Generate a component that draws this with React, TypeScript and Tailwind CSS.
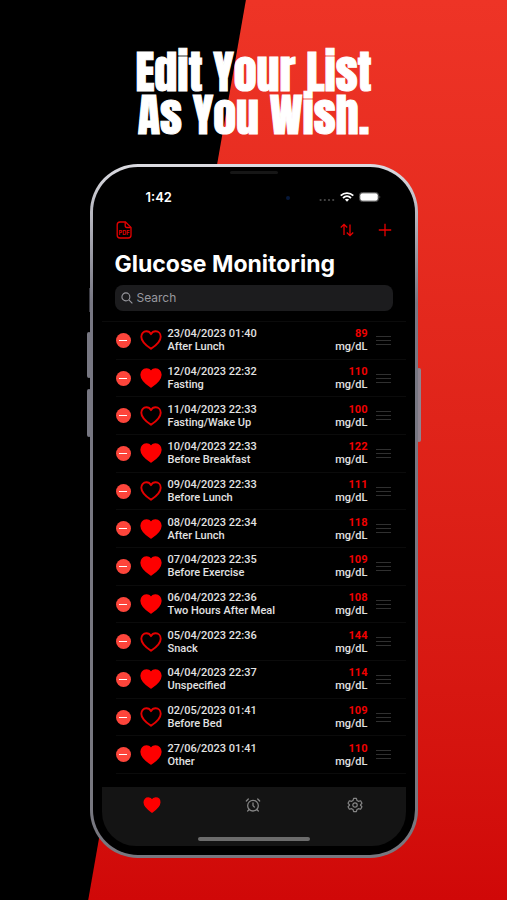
import { AlarmClock } from "lucide-react";

type Reading = {
  date: string;
  label: string;
  value: number;
  filled: boolean;
};

const readings: Reading[] = [
  { date: "23/04/2023 01:40", label: "After Lunch", value: 89, filled: false },
  { date: "12/04/2023 22:32", label: "Fasting", value: 110, filled: true },
  { date: "11/04/2023 22:33", label: "Fasting/Wake Up", value: 100, filled: false },
  { date: "10/04/2023 22:33", label: "Before Breakfast", value: 122, filled: true },
  { date: "09/04/2023 22:33", label: "Before Lunch", value: 111, filled: false },
  { date: "08/04/2023 22:34", label: "After Lunch", value: 118, filled: true },
  { date: "07/04/2023 22:35", label: "Before Exercise", value: 109, filled: true },
  { date: "06/04/2023 22:36", label: "Two Hours After Meal", value: 108, filled: true },
  { date: "05/04/2023 22:36", label: "Snack", value: 144, filled: false },
  { date: "04/04/2023 22:37", label: "Unspecified", value: 114, filled: true },
  { date: "02/05/2023 01:41", label: "Before Bed", value: 109, filled: false },
  { date: "27/06/2023 01:41", label: "Other", value: 110, filled: true },
];

function HeartIcon({ filled, className }: { filled: boolean; className: string }) {
  return (
    <svg viewBox="0 0 22 20" className={className} aria-hidden="true">
      <path
        d="M11 18.800C5.200 14.900 1.300 11.200 1.300 6.700 1.300 3.500 3.500 1.300 6.300 1.300c2 0 3.800 1.100 4.700 2.900.9-1.800 2.700-2.900 4.700-2.900 2.800 0 5 2.200 5 5.400 0 4.500-3.900 8.200-9.700 12.100z"
        fill={filled ? "#fe0000" : "none"}
        stroke={filled ? "#fe0000" : "#e40000"}
        strokeWidth="1.900"
        strokeLinejoin="round"
      />
    </svg>
  );
}

function PdfIcon() {
  return (
    <svg viewBox="0 0 16 18" className="h-[18px] w-4" fill="none" stroke="#e60000" strokeWidth="1.300" aria-hidden="true">
      <path d="M4 1h5.500L15 6.400v7.800c0 1.800-1 2.800-2.800 2.800H4c-1.800 0-2.800-1-2.800-2.800V3.800C1.200 2 2.200 1 4 1z" />
      <path d="M9.200 1.200v3.600c0 1 .6 1.700 1.700 1.700h3.900" />
      <text x="8" y="14" textAnchor="middle" fontSize="5.500" fontWeight="700" fontFamily="Inter, sans-serif" fill="#e60000" stroke="none">
        PDF
      </text>
    </svg>
  );
}

function StatusBar() {
  return (
    <div className="flex h-4 items-center justify-between pr-[25px] pl-11">
      <span className="text-[13px] leading-4 font-semibold text-white">1:42</span>
      <div className="flex items-center gap-[5px]">
        <svg viewBox="0 0 16 4" className="mt-1.5 h-1 w-4" fill="#4a4a4a" aria-hidden="true">
          <circle cx="1.600" cy="2" r="1.100" />
          <circle cx="5.800" cy="2" r="1.100" />
          <circle cx="10" cy="2" r="1.100" />
          <circle cx="14.200" cy="2" r="1.100" />
        </svg>
        <svg viewBox="0 0 14 10" className="h-2.5 w-3.5" fill="none" stroke="#fff" strokeWidth="1.800" aria-hidden="true">
          <path d="M.7 3.600c3.600-3.400 9-3.400 12.600 0" />
          <path d="M3 6c2.400-2.200 5.600-2.200 8 0" />
          <path d="M4.900 7.500c1.300-1 2.900-1 4.200 0L7 9.700z" fill="#fff" stroke="none" />
        </svg>
        <svg viewBox="0 0 22 10" className="h-2.5 w-[22px]" aria-hidden="true">
          <rect x=".5" y=".5" width="19" height="9" rx="2.800" fill="none" stroke="#555" />
          <rect x="1.200" y="1.200" width="17.600" height="7.600" rx="2" fill="#fff" />
          <path d="M20.500 3.500c1 .3 1 2.700 0 3z" fill="#555" />
        </svg>
      </div>
    </div>
  );
}

function Toolbar() {
  return (
    <div className="flex h-5 items-center justify-between px-3.5">
      <button type="button" aria-label="Export PDF">
        <PdfIcon />
      </button>
      <div className="flex items-center gap-6">
        <button type="button" aria-label="Sort">
          <svg viewBox="0 0 14 14" className="size-3.5" fill="none" stroke="#e60000" strokeWidth="1.300" aria-hidden="true">
            <path d="M4 12V1.500M.8 4.500L4 1.300l3.200 3.200" />
            <path d="M10 1.500v11M6.800 9.500l3.200 3.200 3.200-3.200" />
          </svg>
        </button>
        <button type="button" aria-label="Add reading">
          <svg viewBox="0 0 14 14" className="size-3.5" stroke="#e60000" strokeWidth="1.300" aria-hidden="true">
            <path d="M7 .8v12.400M.8 7h12.400" />
          </svg>
        </button>
      </div>
    </div>
  );
}

function ReadingRow({ reading }: { reading: Reading }) {
  return (
    <li className="ml-3.5 flex flex-1 items-center border-b border-[#0b0b0b] pr-[15px]">
      <button
        type="button"
        aria-label={`Delete ${reading.date}`}
        className="grid size-[15px] place-items-center rounded-full bg-[#fd453b]"
      >
        <span className="h-px w-2 bg-white" />
      </button>
      <HeartIcon filled={reading.filled} className="ml-[9px] h-5 w-[22px]" />
      <div className="ml-1.5 flex-1 font-[Roboto,sans-serif] text-[11px] leading-[13px] font-medium text-[#e2e2e2]">
        <p>{reading.date}</p>
        <p>{reading.label}</p>
      </div>
      <div className="text-right font-[Roboto,sans-serif] text-[11px] leading-[13px] font-medium text-[#e2e2e2]">
        <p className="font-bold text-[#f00000]">{reading.value}</p>
        <p>mg/dL</p>
      </div>
      <div className="ml-2 flex w-[15px] flex-col gap-[3px]" aria-hidden="true">
        <span className="h-px bg-[#303030]" />
        <span className="h-px bg-[#303030]" />
        <span className="h-px bg-[#303030]" />
      </div>
    </li>
  );
}

function TabBar() {
  return (
    <nav className="rounded-b-[34px] bg-[#141414]">
      <div className="grid h-9 grid-cols-3 place-items-center">
        <button type="button" aria-label="Readings">
          <HeartIcon filled className="h-4 w-[18px]" />
        </button>
        <button type="button" aria-label="Reminders">
          <AlarmClock className="size-4 text-[#858585]" strokeWidth={1.9} />
        </button>
        <button type="button" aria-label="Settings">
          <svg viewBox="0 0 24 24" className="size-4" fill="none" stroke="#858585" strokeWidth="1.800" aria-hidden="true">
            <path strokeLinejoin="round" d="M9.900 2h4.200l.9 3.300 2.100 1.200 3.300-.9 2.100 3.700L20.100 12l2.400 2.700-2.100 3.700-3.300-.9-2.100 1.200-.9 3.300H9.900L9 18.700l-2.100-1.200-3.300.9-2.100-3.700L3.900 12 1.500 9.300l2.100-3.700 3.300.9L9 5.300z" />
            <circle cx="12" cy="12" r="3.300" />
          </svg>
        </button>
      </div>
      <div className="px-24 pt-3.5 pb-[5px]">
        <div className="h-1 rounded-full bg-[#6c6c6c]" />
      </div>
    </nav>
  );
}

function Phone() {
  return (
    <div className="relative mx-auto w-full max-w-[328px]">
      <span className="absolute top-[124px] -left-px h-6 w-1 bg-[#3c3c44]" />
      <span className="absolute top-[168px] -left-[3px] h-[46px] w-1 rounded-sm bg-[#777782]" />
      <span className="absolute top-[225px] -left-[3px] h-12 w-1 rounded-sm bg-[#777782]" />
      <span className="absolute top-[204px] -right-[3px] h-[74px] w-1 rounded-sm bg-[#8e8490]" />

      <div className="relative rounded-[48px] bg-linear-to-b from-[#dcdce2] via-[#777783] via-20% to-[#77777f] p-[3px]">
        <main className="relative flex min-h-[688px] flex-col rounded-[45px] bg-black px-[9px] pb-[9px]">
          <span className="absolute top-[29px] left-[60%] size-1 rounded-full bg-[#06183a]" />
          <div className="mx-auto mt-1 h-[3px] w-12 rounded-full bg-[#161616]" />
          <div className="mt-[15px]">
            <StatusBar />
          </div>
          <div className="mt-[15px]">
            <Toolbar />
          </div>
          <h2 className="mt-[9px] px-[13px] text-[23px] leading-[30px] font-bold text-white">
            Glucose Monitoring
          </h2>
          <label className="mx-[13px] mt-1.5 flex h-[26px] items-center gap-1 rounded-lg bg-[#1c1c1e] px-1.5">
            <svg viewBox="0 0 13 13" className="size-3 shrink-0" fill="none" stroke="#98989e" strokeWidth="1.200" aria-hidden="true">
              <circle cx="5.300" cy="5.300" r="4.300" />
              <path d="M8.500 8.500l3.800 3.800" />
            </svg>
            <input
              type="text"
              aria-label="Search"
              placeholder="Search"
              className="w-full bg-transparent text-xs leading-4 text-white outline-none placeholder:text-[#98989e]"
            />
          </label>
          <ul className="mt-2.5 mb-[13px] flex flex-1 flex-col border-t border-[#0b0b0b]">
            {readings.map((reading) => (
              <ReadingRow key={reading.date} reading={reading} />
            ))}
          </ul>
          <TabBar />
        </main>
      </div>
    </div>
  );
}

export default function App() {
  return (
    <div className="relative isolate min-h-screen overflow-hidden bg-black px-6 pt-[50px] pb-[42px] font-[Inter,sans-serif]">
      <div className="absolute inset-0 -z-10 bg-linear-to-b from-[#ee3426] to-[#d00808] [clip-path:polygon(48.500%_0,100%_0,100%_100%,17.400%_100%)]" />
      <h1 className="mb-7 text-center font-['Anton','Liberation_Sans',sans-serif] text-[46px] leading-[43px] font-normal text-white [-webkit-text-stroke:1px_white]">
        Edit Your List
        <br />
        As You Wish.
      </h1>
      <Phone />
    </div>
  );
}
